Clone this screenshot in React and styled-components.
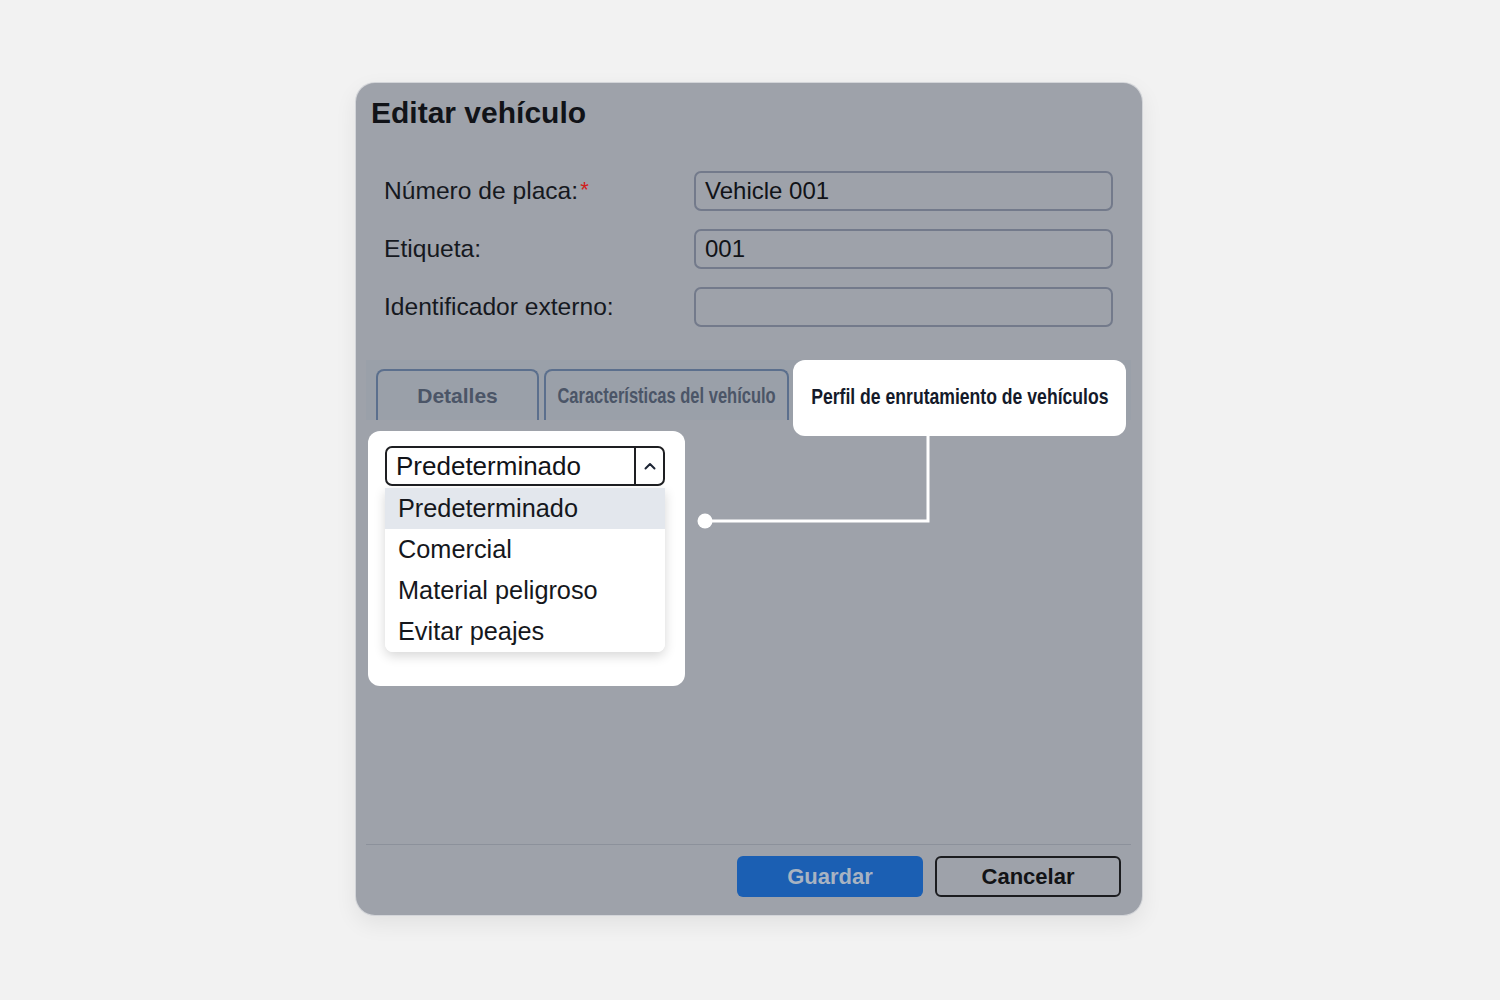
import React from "react";
import styled, { createGlobalStyle } from "styled-components";

const Global = createGlobalStyle`
  html, body { margin: 0; padding: 0; background: #f2f2f2; }
  body { font-family: "Liberation Sans", Arial, sans-serif; }
  *, *::before, *::after { box-sizing: border-box; }
`;

const Page = styled.div`
  height: 1000px;
  padding: 82px 0 0 355px;
`;

const Dialog = styled.div`
  position: relative;
  width: 788px;
  height: 834px;
  background: #9ea2aa;
  border: 1px solid rgba(255, 255, 255, 0.55);
  border-radius: 20px;
  box-shadow: 0 8px 22px rgba(0, 0, 0, 0.07);
  display: flex;
  flex-direction: column;
`;

const Title = styled.h1`
  margin: 0;
  padding: 12px 0 0 15px;
  font-size: 30px;
  line-height: 36px;
  font-weight: 700;
  color: #111318;
`;

const Form = styled.div`
  margin-top: 40px;
  padding: 0 29px 0 28px;
  display: grid;
  grid-template-columns: 310px 1fr;
  row-gap: 18px;
  align-items: center;
`;

const Label = styled.label`
  font-size: 24.6px;
  color: #16191f;
`;

const Req = styled.span`
  color: #d0201c;
  font-size: 22px;
  vertical-align: 2px;
  margin-left: 2px;
`;

const Input = styled.div`
  height: 40px;
  border: 2px solid #737a8b;
  border-radius: 7px;
  padding: 0 9px;
  display: flex;
  align-items: center;
  font-size: 24px;
  color: #111318;
`;

const TabBand = styled.div`
  margin: 33px 11px 0 10px;
  height: 60px;
  padding: 9px 0 0 10px;
  background: #9aa0a9;
  display: flex;
  align-items: flex-start;
  gap: 5px;
`;

const Tab = styled.div`
  width: ${(p) => p.$w}px;
  height: 51px;
  border: 2px solid #5b6f8d;
  border-bottom: none;
  border-radius: 8px 8px 0 0;
  display: flex;
  align-items: center;
  justify-content: center;
  font-size: ${(p) => p.$size || 21}px;
  font-weight: 700;
  color: #4b5567;
  white-space: nowrap;
`;

const Squeeze = styled.span`
  display: inline-block;
  white-space: nowrap;
  transform: scaleX(${(p) => p.$sx});
  transform-origin: center;
`;

const ActiveHighlight = styled.div`
  width: 333px;
  height: 76px;
  margin: -9px 0 0 -1px;
  background: #ffffff;
  border-radius: 12px;
  display: flex;
  justify-content: center;
  padding-top: 24px;
  font-size: 22px;
  line-height: 26px;
  font-weight: 700;
  color: #141a2a;
  white-space: nowrap;
`;

const Content = styled.div`
  flex: 1;
  padding: 11px 0 0 12px;
`;

const DropHighlight = styled.div`
  width: 317px;
  height: 255px;
  background: #ffffff;
  border-radius: 12px;
  padding: 15px 20px 0 17px;
`;

const Select = styled.div`
  width: 280px;
  height: 40px;
  border: 2px solid #1e1f22;
  border-radius: 7px;
  display: flex;
  font-size: 26px;
  color: #111318;
`;

const SelectValue = styled.div`
  flex: 1;
  display: flex;
  align-items: center;
  padding-left: 9px;
`;

const ChevronBox = styled.div`
  width: 29px;
  border-left: 2px solid #1e1f22;
  display: flex;
  align-items: center;
  justify-content: center;
`;

const Menu = styled.div`
  margin-top: 2px;
  width: 280px;
  background: #ffffff;
  border-radius: 0 0 8px 8px;
  box-shadow: 0 4px 12px rgba(0, 0, 0, 0.16);
  overflow: hidden;
`;

const MenuItem = styled.div`
  height: 41px;
  padding: 0 13px;
  display: flex;
  align-items: center;
  font-size: 25.3px;
  color: #15171c;
  background: ${(p) => (p.$active ? "#e3e7ed" : "#ffffff")};
`;

const Connector = styled.svg`
  position: absolute;
  left: 340px;
  top: 350px;
  overflow: visible;
`;

const Divider = styled.div`
  margin: 0 11px 0 10px;
  height: 1px;
  background: #8c919b;
`;

const Footer = styled.div`
  padding: 11px 21px 18px 0;
  display: flex;
  justify-content: flex-end;
  gap: 12px;
`;

const Button = styled.button`
  width: 186px;
  height: 41px;
  border-radius: 6px;
  font-family: "Liberation Sans", Arial, sans-serif;
  font-size: 22px;
  font-weight: 700;
  cursor: pointer;
  background: ${(p) => (p.$primary ? "#1b5fb3" : "transparent")};
  color: ${(p) => (p.$primary ? "#a8b3c2" : "#121316")};
  border: ${(p) => (p.$primary ? "none" : "2px solid #1b1c1f")};
`;

const options = ["Predeterminado", "Comercial", "Material peligroso", "Evitar peajes"];

export default function App() {
  return (
    <>
      <Global />
      <Page>
        <Dialog>
          <Title>Editar vehículo</Title>
          <Form>
            <Label>
              Número de placa:<Req>*</Req>
            </Label>
            <Input>Vehicle 001</Input>
            <Label>Etiqueta:</Label>
            <Input>001</Input>
            <Label>Identificador externo:</Label>
            <Input />
          </Form>
          <TabBand>
            <Tab $w={163}>Detalles</Tab>
            <Tab $w={245} $size={22}>
              <Squeeze $sx={0.75}>Características del vehículo</Squeeze>
            </Tab>
            <ActiveHighlight>
              <Squeeze $sx={0.8}>Perfil de enrutamiento de vehículos</Squeeze>
            </ActiveHighlight>
          </TabBand>
          <Content>
            <DropHighlight>
              <Select>
                <SelectValue>Predeterminado</SelectValue>
                <ChevronBox>
                  <svg width="12" height="8" viewBox="0 0 12 8">
                    <polyline
                      points="1.5,6.5 6,2 10.5,6.5"
                      fill="none"
                      stroke="#1d2535"
                      strokeWidth="2"
                      strokeLinecap="round"
                      strokeLinejoin="round"
                    />
                  </svg>
                </ChevronBox>
              </Select>
              <Menu>
                {options.map((o, i) => (
                  <MenuItem key={o} $active={i === 0}>
                    {o}
                  </MenuItem>
                ))}
              </Menu>
            </DropHighlight>
          </Content>
          <Divider />
          <Footer>
            <Button $primary>Guardar</Button>
            <Button>Cancelar</Button>
          </Footer>
          <Connector width="240" height="100">
            <path d="M9 88 H232 V3" fill="none" stroke="#ffffff" strokeWidth="3" />
            <circle cx="9" cy="88" r="7.5" fill="#ffffff" />
          </Connector>
        </Dialog>
      </Page>
    </>
  );
}
